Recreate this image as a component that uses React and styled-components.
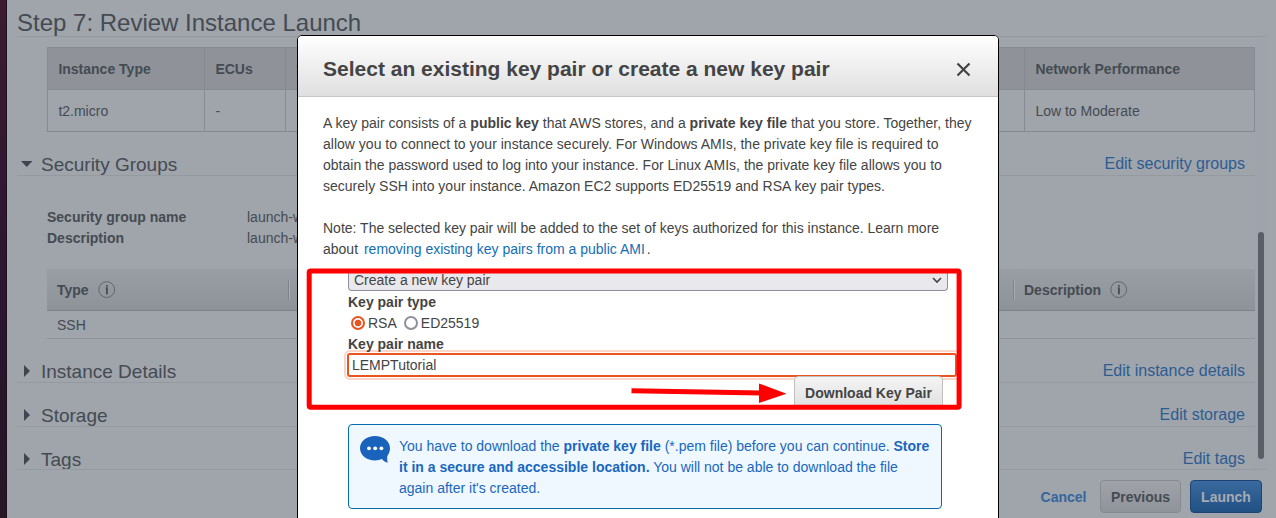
import React from "react";
import styled, { createGlobalStyle, css } from "styled-components";

const GlobalStyle = createGlobalStyle`
  *, *::before, *::after { box-sizing: border-box; }
  html, body { margin: 0; padding: 0; overflow: hidden; }
  body {
    font-family: "Liberation Sans", Arial, sans-serif;
    font-size: 14px;
    line-height: 21px;
    color: #444b52;
    background: #a0a4ab;
  }
`;

const Desktop = styled.div`
  position: relative;
  display: flex;
  width: 1276px;
  height: 518px;
  overflow: hidden;
`;

const Wallpaper = styled.div`
  flex: 0 0 7px;
  border-right: 1px solid #20101f;
  background: linear-gradient(#3b1c30 0, #2e1730 45%, #27152a 75%, #261725 100%);
`;

const Page = styled.div`
  flex: 1;
  display: flex;
  flex-direction: column;
  padding-left: 10px;
  padding-right: 9px;
  background: #a0a4ab;
`;

const StepTitle = styled.h1`
  flex: 0 0 37px;
  min-height: 0;
  height: 37px;
  margin: 0;
  padding-top: 8px;
  font-size: 24px;
  line-height: 29px;
  font-weight: 400;
  border-bottom: 1px solid #959aa1;
`;

const Scroller = styled.div`
  flex: 0 0 432px;
  height: 432px;
  display: flex;
  overflow: hidden;
`;

const Content = styled.main`
  flex: 0 0 1238px;
  padding-top: 10px;
`;

const ScrollTrack = styled.div`
  flex: 1;
  display: flex;
  justify-content: center;
  padding-top: 195px;
  background: #9fa3ab;
`;

const ScrollThumb = styled.div`
  width: 6px;
  height: 227px;
  border-radius: 3px;
  background: #5a5e66;
`;

const InstanceTable = styled.div`
  display: grid;
  grid-template-columns: 157px 81px 739px 230px;
  margin-left: 30px;
  border: solid #868a92;
  border-width: 1px 0 0 1px;
`;

const Cell = styled.div`
  height: 42px;
  padding: 11px 10px 0 10.4px;
  border: solid #868a92;
  border-width: 0 1px 1px 0;
  ${(p) => p.$head && css`
    background: #8f9399;
    font-weight: 700;
  `}
`;

const SectionBar = styled.div`
  display: flex;
  align-items: flex-end;
  height: 44px;
  padding-right: 10px;
  border-bottom: 1px solid #959aa1;
`;

const Caret = styled.svg`
  width: 12px;
  height: 12px;
  margin: 0 8px 5px 4px;
  fill: #3f454e;
`;

const SectionTitle = styled.h2`
  flex: 1;
  margin: 0 0 -1px;
  font-size: 19px;
  line-height: 22px;
  font-weight: 400;
`;

const EditLink = styled.a`
  margin-bottom: -1px;
  font-size: 16px;
  line-height: 24px;
  color: #2c5d92;
`;

const Details = styled.dl`
  display: grid;
  grid-template-columns: 200px 1fr;
  margin: 31px 0 20px 30px;
`;

const Term = styled.dt`
  font-weight: 700;
`;

const Value = styled.dd`
  margin: 0;
`;

const RuleHead = styled.div`
  display: flex;
  align-items: center;
  height: 42px;
  margin-left: 30px;
  background: linear-gradient(#999da4, #8e9299);
  border-bottom: 1px solid #7e838a;
  font-weight: 700;
`;

const RuleColumn = styled.div`
  display: flex;
  align-items: center;
  gap: 9px;
  width: ${(p) => p.$width}px;
  height: 20px;
  padding-left: 10px;
  border-right: ${(p) => (p.$last ? "none" : "1px solid #7f848b")};
  box-shadow: ${(p) => (p.$last ? "none" : "1px 0 #a9adb3")};
`;

const RuleName = styled.span`
  padding-top: 2px;
`;

const InfoGlyph = styled.svg`
  width: 18px;
  height: 18px;
`;

const RuleRow = styled.div`
  height: 28px;
  margin-left: 30px;
  padding: 4px 10px 0;
  border-bottom: 1px solid #8e9299;
`;

const Footer = styled.footer`
  flex: 1;
  display: flex;
  align-items: flex-start;
  justify-content: flex-end;
  padding: 10px 5px 0 0;
  border-top: 1px solid #959aa1;
`;

const CancelLink = styled.a`
  margin: 7px 13.5px 0 0;
  font-weight: 700;
  color: #34679d;
`;

const FooterButton = styled.button`
  width: ${(p) => p.$width}px;
  height: 33px;
  margin-left: ${(p) => (p.$primary ? 9 : 0)}px;
  padding: 2px 0 0;
  border: 1px solid ${(p) => (p.$primary ? "#1d4473" : "#858990")};
  border-radius: 4px;
  background: ${(p) => (p.$primary ? "linear-gradient(#39699e, #215183)" : "linear-gradient(#9fa3a9, #8f939a)")};
  color: ${(p) => (p.$primary ? "#a7abb3" : "#444b52")};
  font: 700 14px/21px "Liberation Sans", Arial, sans-serif;
`;

const Dialog = styled.section`
  position: absolute;
  top: 35px;
  left: 297px;
  width: 702px;
  height: 520px;
  border: 1px solid #000;
  border-radius: 5px;
  overflow: hidden;
  background: #fff;
  color: #444;
`;

const DialogHeader = styled.header`
  display: flex;
  align-items: center;
  justify-content: space-between;
  height: 61px;
  padding: 5px 27px 0 25px;
  background: linear-gradient(#fff, #dfdfdf);
  border-bottom: 1px solid #c6c6c6;
`;

const DialogTitle = styled.h3`
  margin: 0;
  font-size: 21px;
  line-height: 26px;
  font-weight: 700;
`;

const CloseIcon = styled.svg`
  width: 15px;
  height: 15px;
  margin-top: 2px;
`;

const DialogBody = styled.div`
  padding: 16px 25px 0;
`;

const Paragraph = styled.p`
  margin: 0 0 ${(p) => p.$gap}px;
  letter-spacing: ${(p) => (p.$wide ? "0.01px" : "normal")};
  font-feature-settings: "liga" 1;
  white-space: nowrap;
`;

const Link = styled.a`
  margin: 0 2px;
  color: #146eb4;
`;

const KeyForm = styled.div`
  height: 134px;
  margin: 0 -10px 18px 20px;
  padding: 0 5px;
  overflow: hidden;
`;

const SelectBox = styled.div`
  display: flex;
  align-items: flex-end;
  justify-content: space-between;
  width: 600px;
  height: 19px;
  margin-bottom: 1px;
  padding: 0 5px;
  border: 1px solid #8f8f9d;
  border-top: 0;
  border-radius: 0 0 4px 4px;
  background: #e9e9ed;
`;

const SelectText = styled.span`
  margin-bottom: -1px;
`;

const Chevron = styled.svg`
  width: 10px;
  height: 7px;
  margin-bottom: 6px;
`;

const FieldLabel = styled.div`
  font-weight: 700;
`;

const RadioRow = styled.div`
  display: flex;
  align-items: center;
  height: 21px;
  padding-left: 3px;
`;

const RadioLabel = styled.label`
  display: flex;
  align-items: center;
  gap: 3px;
  margin-right: 7px;
`;

const RadioDot = styled.span`
  width: 14px;
  height: 14px;
  margin-bottom: 1px;
  border: 2px solid ${(p) => (p.$checked ? "#e95420" : "#8f8f9d")};
  border-radius: 50%;
  background: ${(p) => (p.$checked ? "radial-gradient(circle, #e95420 3px, #fff 3.7px)" : "#fff")};
`;

const NameField = styled.div`
  width: 610px;
  height: 24px;
  margin: -2px 0 0 -1px;
  padding-left: 3px;
  line-height: 20px;
  border: 2px solid #e95420;
  border-radius: 3px;
  box-shadow: 0 0 0 1px #fff, 0 0 0 3px #fbd5c8;
`;

const DownloadButton = styled.button`
  position: relative;
  display: block;
  width: 149px;
  height: 34px;
  margin: -1px 0 0 446px;
  padding: 0;
  border: 1px solid #c0c0c0;
  border-radius: 4px;
  background: linear-gradient(#f4f4f4, #dfdfdf);
  color: #444;
  font: 700 14px/21px "Liberation Sans", Arial, sans-serif;
`;

const Notice = styled.div`
  display: flex;
  width: 594px;
  height: 85px;
  margin-left: 25px;
  padding: 11px;
  border: 1px solid #0769ae;
  border-radius: 4px;
  background: #f0f8ff;
  color: #1967be;
  white-space: nowrap;
`;

const SpeechIcon = styled.svg`
  width: 30px;
  height: 28px;
  margin-right: 9px;
`;

const Markup = styled.svg`
  position: absolute;
  left: 300px;
  top: 260px;
  width: 670px;
  height: 156px;
`;

function Info() {
  return (
    <InfoGlyph viewBox="0 0 18 18" fill="none">
      <circle cx="8.700" cy="8.600" r="7.900" stroke="#60656d" />
      <path d="M7.800 7.200h1.100v6" stroke="#454a52" strokeWidth="1.800" />
      <path d="M8 4.700h1.800" stroke="#454a52" strokeWidth="1.600" />
    </InfoGlyph>
  );
}

function Section({ title, link, open }) {
  return (
    <SectionBar>
      <Caret viewBox="0 0 12 12">
        <path d={open ? "M0 3h11.500L5.750 9z" : "M3 0v12l6-6z"} />
      </Caret>
      <SectionTitle>{title}</SectionTitle>
      <EditLink>{link}</EditLink>
    </SectionBar>
  );
}

export default function App() {
  return (
    <Desktop>
      <GlobalStyle />
      <Wallpaper />
      <Page>
        <StepTitle>Step 7: Review Instance Launch</StepTitle>
        <Scroller>
          <Content>
            <InstanceTable>
              <Cell $head>Instance Type</Cell>
              <Cell $head>ECUs</Cell>
              <Cell $head>vCPUs</Cell>
              <Cell $head>Network Performance</Cell>
              <Cell>t2.micro</Cell>
              <Cell>-</Cell>
              <Cell>1</Cell>
              <Cell>Low to Moderate</Cell>
            </InstanceTable>
            <Section title="Security Groups" link="Edit security groups" open />
            <Details>
              <Term>Security group name</Term>
              <Value>launch-wizard-1</Value>
              <Term>Description</Term>
              <Value>launch-wizard-1</Value>
            </Details>
            <RuleHead>
              <RuleColumn $width={242}><RuleName>Type</RuleName><Info /></RuleColumn>
              <RuleColumn $width={725} />
              <RuleColumn $width={240} $last><RuleName>Description</RuleName><Info /></RuleColumn>
            </RuleHead>
            <RuleRow>SSH</RuleRow>
            <Section title="Instance Details" link="Edit instance details" />
            <Section title="Storage" link="Edit storage" />
            <Section title="Tags" link="Edit tags" />
          </Content>
          <ScrollTrack>
            <ScrollThumb />
          </ScrollTrack>
        </Scroller>
        <Footer>
          <CancelLink>Cancel</CancelLink>
          <FooterButton $width={81}>Previous</FooterButton>
          <FooterButton $width={72} $primary>Launch</FooterButton>
        </Footer>
      </Page>
      <Dialog>
        <DialogHeader>
          <DialogTitle>Select an existing key pair or create a new key pair</DialogTitle>
          <CloseIcon viewBox="0 0 15 15">
            <path d="M1.5 1.5l12 12M13.5 1.5l-12 12" stroke="#444" strokeWidth="2.2" />
          </CloseIcon>
        </DialogHeader>
        <DialogBody>
          <Paragraph $gap={21} $wide>
            A key pair consists of a <b>public key</b> that AWS stores, and a <b>private key file</b> that you store. Together, they<br />
            allow you to connect to your instance securely. For Windows AMIs, the private key file is required to<br />
            obtain the password used to log into your instance. For Linux AMIs, the private key file allows you to<br />
            securely SSH into your instance. Amazon EC2 supports ED25519 and RSA key pair types.
          </Paragraph>
          <Paragraph $gap={12}>
            Note: The selected key pair will be added to the set of keys authorized for this instance. Learn more<br />
            about <Link>removing existing key pairs from a public AMI</Link>.
          </Paragraph>
          <KeyForm>
            <SelectBox>
              <SelectText>Create a new key pair</SelectText>
              <Chevron viewBox="0 0 10 7">
                <path d="M1 1l4 4 4-4" fill="none" stroke="#444" strokeWidth="1.6" />
              </Chevron>
            </SelectBox>
            <FieldLabel>Key pair type</FieldLabel>
            <RadioRow>
              <RadioLabel><RadioDot $checked />RSA</RadioLabel>
              <RadioLabel><RadioDot />ED25519</RadioLabel>
            </RadioRow>
            <FieldLabel>Key pair name</FieldLabel>
            <NameField>LEMPTutorial</NameField>
            <DownloadButton>Download Key Pair</DownloadButton>
          </KeyForm>
          <Notice>
            <SpeechIcon viewBox="0 0 30 28">
              <path d="M15 0C6.700 0 0 5.300 0 12.200S6.700 24.500 15 24.500c2.600 0 5-.5 7.100-1.400 1.500 2.100 3.400 3.200 5.800 3.700-.8-2.300-.8-4.500-.6-6.900C29 17.700 30 15.100 30 12.200 30 5.300 23.300 0 15 0z" fill="#1a63bd" />
              <g fill="#fff">
                <circle cx="9" cy="12.300" r="1.900" />
                <circle cx="15.200" cy="12.300" r="1.900" />
                <circle cx="21.400" cy="12.300" r="1.900" />
              </g>
            </SpeechIcon>
            <div>
              You have to download the <b>private key file</b> (*.pem file) before you can continue. <b>Store<br />
              it in a secure and accessible location.</b> You will not be able to download the file<br />
              again after it's created.
            </div>
          </Notice>
        </DialogBody>
      </Dialog>
      <Markup viewBox="300 260 670 156">
        <rect x="309.200" y="270.900" width="649.900" height="136.300" rx="1.500" fill="none" stroke="#f00" strokeWidth="5" />
        <path d="M631.500 390.700L762 393" stroke="#f00" strokeWidth="5" />
        <path d="M759 383.500v19.500l27.500-9.300z" fill="#f00" />
      </Markup>
    </Desktop>
  );
}
